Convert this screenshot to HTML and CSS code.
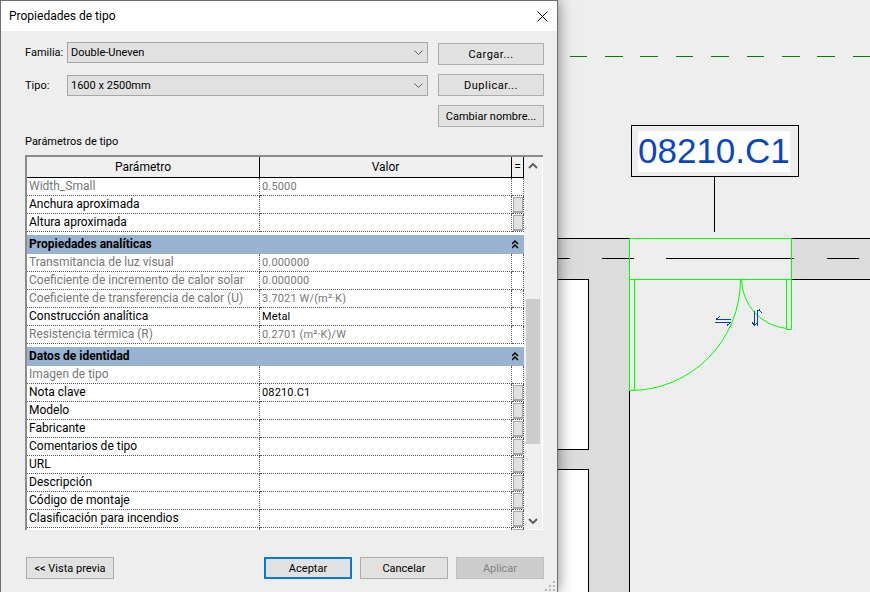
FILE: index.html
```html
<!DOCTYPE html>
<html lang="es">
<head>
  <meta charset="UTF-8">
  <title>Propiedades de tipo</title>
  <link rel="stylesheet" href="styles.css">
</head>
<body>

<!-- plano detras del dialogo -->
<svg class="plan" width="870" height="592" viewBox="0 0 870 592">
  <rect x="558" y="239" width="312" height="40" fill="#dcdcdc"/>
  <rect x="589" y="279" width="41" height="313" fill="#dcdcdc"/>
  <rect x="558" y="280" width="30" height="169" fill="#fff"/>
  <rect x="558" y="470" width="30" height="122" fill="#fff"/>
  <rect x="558" y="450" width="31" height="19" fill="#dcdcdc"/>
  <rect x="630" y="239" width="161" height="40" fill="#eee"/>

  <path class="dash" d="M570 56.5h17M605 56.5h18M640 56.5h18M676 56.5h17M711 56.5h18M747 56.5h17M782 56.5h18M817 56.5h18M853 56.5h17"/>

  <g class="ink">
    <path d="M558 238.5H870M558 279.5H588.5V449.5H558M558 469.5H588.5V592M629.5 391V592M791 279.5H870"/>
    <path d="M558 258.5h12M602 258.5h32M666 258.5h128M827 258.5h32"/>
    <path d="M714.5 176V232"/>
    <rect x="631.5" y="125.5" width="167" height="51" fill="none"/>
  </g>

  <rect x="638" y="131" width="152" height="41" fill="#fff"/>
  <text class="tag" x="638" y="163">08210.C1</text>

  <g class="door">
    <path d="M629.5 238.5H791.500V279.500H629.500ZM629.500 279.500V390.500H634.500V279.500M786.500 279.500V329.500H791.500V279.500"/>
    <path d="M630 390.500A110 111 0 0 0 740.500 279.500"/>
    <path d="M741.500 279.500A50 50 0 0 0 786.500 328.500"/>
  </g>

  <g class="flip">
    <path d="M716 319.5h15M716 319.5l4-3M715 322.5h16M731 322.5l-4 3"/>
    <path d="M754.5 311v15M754.5 326l-2.500-4M754.500 326l2-3M757.500 326v-15M757.500 311l2-1 2 3"/>
  </g>
</svg>

<div class="dialog">
  <div class="titlebar">
    <span>Propiedades de tipo</span>
    <svg class="close" width="11" height="11" viewBox="0 0 11 11"><path d="M.5.500l10 10M10.500.500l-10 10"/></svg>
  </div>

  <div class="top">
    <div class="fields">
      <div class="field">
        <label>Familia:</label>
        <div class="combo"><span>Double-Uneven</span>
          <svg width="9" height="5" viewBox="0 0 9 5"><path d="M.5.500l4 4 4-4"/></svg>
        </div>
      </div>
      <div class="field">
        <label>Tipo:</label>
        <div class="combo"><span>1600 x 2500mm</span>
          <svg width="9" height="5" viewBox="0 0 9 5"><path d="M.5.500l4 4 4-4"/></svg>
        </div>
      </div>
    </div>
    <div class="side-btns">
      <button class="btn wide">Cargar...</button>
      <button class="btn wide">Duplicar...</button>
      <button class="btn">Cambiar nombre...</button>
    </div>
  </div>

  <h2>Parámetros de tipo</h2>

  <div class="pane">
    <div class="grid-wrap">
      <table class="params">
        <colgroup><col class="c1"><col class="c2"><col class="c3"></colgroup>
        <thead>
          <tr><th>Parámetro</th><th>Valor</th><th>=</th></tr>
        </thead>
        <tbody>
          <tr class="ro"><td>Width_Small</td><td>0.5000</td><td></td></tr>
          <tr><td>Anchura aproximada</td><td></td><td><i class="dots"></i></td></tr>
          <tr><td>Altura aproximada</td><td></td><td><i class="dots"></i></td></tr>
          <tr class="section"><td colspan="2">Propiedades analíticas</td><td><svg width="8" height="9" viewBox="0 0 8 9"><path d="M1 4l3-3 3 3M1 8l3-3 3 3"/></svg></td></tr>
          <tr class="ro"><td>Transmitancia de luz visual</td><td>0.000000</td><td></td></tr>
          <tr class="ro"><td>Coeficiente de incremento de calor solar</td><td>0.000000</td><td></td></tr>
          <tr class="ro"><td>Coeficiente de transferencia de calor (U)</td><td>3.7021 W/(m²·K)</td><td></td></tr>
          <tr><td>Construcción analítica</td><td>Metal</td><td></td></tr>
          <tr class="ro"><td>Resistencia térmica (R)</td><td>0.2701 (m²·K)/W</td><td></td></tr>
          <tr class="section"><td colspan="2">Datos de identidad</td><td><svg width="8" height="9" viewBox="0 0 8 9"><path d="M1 4l3-3 3 3M1 8l3-3 3 3"/></svg></td></tr>
          <tr class="ro"><td>Imagen de tipo</td><td></td><td></td></tr>
          <tr><td>Nota clave</td><td>08210.C1</td><td><i class="dots"></i></td></tr>
          <tr><td>Modelo</td><td></td><td><i class="dots"></i></td></tr>
          <tr><td>Fabricante</td><td></td><td><i class="dots"></i></td></tr>
          <tr><td>Comentarios de tipo</td><td></td><td><i class="dots"></i></td></tr>
          <tr><td>URL</td><td></td><td><i class="dots"></i></td></tr>
          <tr><td>Descripción</td><td></td><td><i class="dots"></i></td></tr>
          <tr><td>Código de montaje</td><td></td><td><i class="dots"></i></td></tr>
          <tr><td>Clasificación para incendios</td><td></td><td><i class="dots"></i></td></tr>
          <tr><td></td><td></td><td><i class="dots"></i></td></tr>
        </tbody>
      </table>
    </div>
    <div class="scrollbar">
      <div class="arrow"><svg width="10" height="6" viewBox="0 0 10 6"><path d="M1 5l4-4 4 4"/></svg></div>
      <div class="thumb"></div>
      <div class="arrow arrow-down"><svg width="10" height="6" viewBox="0 0 10 6"><path d="M1 1l4 4 4-4"/></svg></div>
    </div>
  </div>

  <div class="actions">
    <button class="btn preview">&lt;&lt; Vista previa</button>
    <button class="btn default">Aceptar</button>
    <button class="btn">Cancelar</button>
    <button class="btn off">Aplicar</button>
  </div>

  <svg class="grip" width="10" height="10" viewBox="0 0 10 10">
    <path d="M8 0h2v2H8zM4 4h2v2H4zM8 4h2v2H8zM0 8h2v2H0zM4 8h2v2H4zM8 8h2v2H8z"/>
  </svg>
</div>

</body>
</html>
```

FILE: styles.css
```css
* {
  box-sizing: border-box;
}
html, body {
  margin: 0;
  height: 100%;
  overflow: hidden;
}
body {
  background-color: #eeeeee;
  font-family: Roboto, sans-serif;
  font-size: 12px;
  color: #000;
}

/* plano */
.plan {
  position: absolute;
  left: 0;
  top: 0;
}
.plan path, .plan rect {
  shape-rendering: crispEdges;
}
.dash {
  stroke: #008000;
  fill: none;
}
.ink {
  stroke: #000;
  fill: none;
}
.tag {
  font-family: "Liberation Sans", sans-serif;
  font-size: 35px;
  fill: #0a46be;
}
.door path {
  stroke: #00ff00;
  fill: none;
  shape-rendering: auto;
}
.flip path {
  stroke: #0a3fb0;
  fill: none;
}

/* dialogo */
.dialog {
  position: absolute;
  left: 0;
  top: 0;
  width: 558px;
  height: 592px;
  background: #eeeeee;
  border: 1px solid #6e6e6e;
  border-bottom: none;
  box-shadow: 0 0 14px rgba(0,0,0,0.5);
}
.titlebar {
  height: 30px;
  background: #fff;
  display: flex;
  align-items: center;
  justify-content: space-between;
  padding: 0 9px 0 8px;
}
.close path {
  stroke: #000;
  fill: none;
}
.top {
  display: flex;
  gap: 10px;
  padding: 11px 13px 0 24px;
}
.fields {
  width: 403px;
  display: flex;
  flex-direction: column;
  gap: 12px;
  font-size: 11px;
}
.field {
  display: flex;
  align-items: center;
}
.field label {
  width: 42px;
}
.combo {
  flex: 1;
  height: 21px;
  background: #e1e1e1;
  border: 1px solid #a6a6a6;
  display: flex;
  align-items: center;
  justify-content: space-between;
  padding: 0 4px 0 3px;
}
.combo path {
  stroke: #606060;
  fill: none;
}
.side-btns {
  width: 106px;
  margin-top: 1px;
  display: flex;
  flex-direction: column;
  gap: 9px;
}
.btn {
  height: 22px;
  padding: 0;
  background: #e1e1e1;
  border: 1px solid #adadad;
  font-family: inherit;
  font-size: 11px;
  color: #000;
  white-space: nowrap;
}
.wide {
  letter-spacing: 0.5px;
}
h2 {
  margin: 7px 0 5px 24px;
  height: 16px;
  line-height: 16px;
  font-size: 11px;
  font-weight: normal;
}

/* tabla */
.pane {
  display: flex;
  width: 518px;
  height: 375px;
  margin-left: 24px;
  background: #f0f0f0;
  border-top: 2px solid #8c8c8c;
  border-left: 2px solid #8c8c8c;
}
.grid-wrap {
  width: 497px;
  overflow: hidden;
  background: #fff;
}
.params {
  table-layout: fixed;
  width: 497px;
  border-collapse: separate;
  border-spacing: 0;
}
.c1 {
  width: 233px;
}
.c2 {
  width: 252px;
}
.c3 {
  width: 12px;
}
.params th {
  height: 21px;
  padding: 0;
  background: #f0f0f0;
  font-weight: normal;
  border-right: 1px solid #000;
  border-bottom: 1px solid #000;
}
.params td {
  height: 18px;
  padding: 0 2px;
  line-height: 17px;
  white-space: nowrap;
  overflow: hidden;
  border-right: 1px dotted #555;
  border-bottom: 1px dotted #555;
}
.params td:nth-child(2) {
  font-size: 11px;
  letter-spacing: 0.15px;
}
.params td:last-child {
  padding: 0 0 0 1px;
}
.ro td {
  color: #787878;
}
.params .section td {
  height: 22px;
  padding: 0 2px;
  background: #98b3d0;
  font-weight: bold;
  font-size: 12px;
  letter-spacing: 0;
  border-top: 3px solid #fff;
  border-right: none;
  border-bottom: none;
}
.params .section td:last-child {
  padding: 0;
}
.section svg {
  display: block;
  margin-left: -1px;
}
.section path {
  stroke: #000;
  stroke-width: 1.5;
  fill: none;
}
.dots {
  display: block;
  width: 10px;
  height: 16px;
  background: #e1e1e1;
  border: 1px solid #a8a8a8;
  border-bottom-width: 2px;
}

/* barra de desplazamiento */
.scrollbar {
  width: 19px;
  display: flex;
  flex-direction: column;
  padding: 0 2px;
  border-right: 1px solid #fff;
  border-bottom: 1px solid #fff;
}
.arrow {
  height: 17px;
  display: flex;
  align-items: center;
  justify-content: center;
}
.arrow path {
  stroke: #606060;
  stroke-width: 2;
  fill: none;
}
.arrow-down {
  margin-top: auto;
}
.thumb {
  height: 145px;
  margin-top: 125px;
  background: #cdcdcd;
}

/* botones de abajo */
.actions {
  display: flex;
  gap: 8px;
  margin-top: 27px;
  padding: 0 13px 0 25px;
}
.actions .btn {
  width: 88px;
}
.actions .preview {
  margin-right: auto;
}
.actions .default {
  border: 2px solid #0078d7;
}
.actions .off {
  background: #cccccc;
  border-color: #bfbfbf;
  color: #838383;
}
.grip {
  position: absolute;
  right: 2px;
  bottom: 1px;
}
.grip path {
  fill: #b8b8b8;
}
```
